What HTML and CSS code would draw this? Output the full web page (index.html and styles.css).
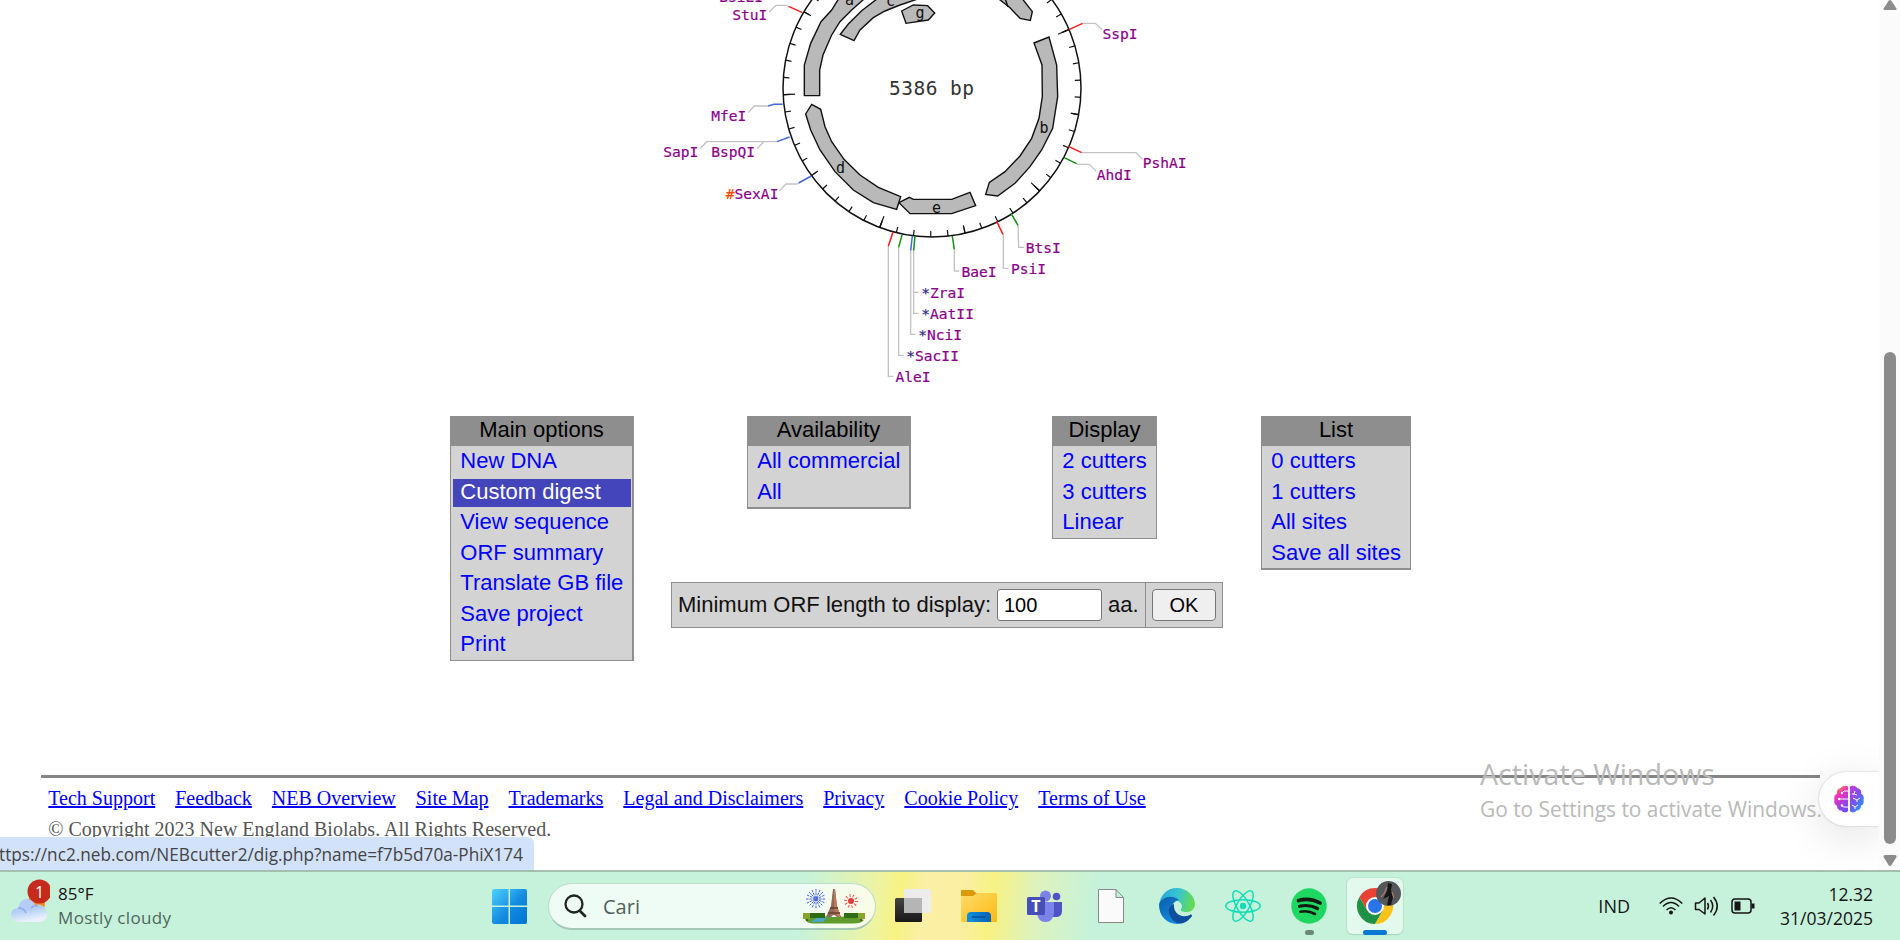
FILE: index.html
```html
<!DOCTYPE html>
<html lang="en">
<head>
<meta charset="utf-8">
<title>NEBcutter</title>
<link rel="stylesheet" href="styles.css">
</head>
<body>
<div class="browser">
  <main class="page">
    <svg class="map" width="600" height="400" viewBox="640 0 600 400">
      <g fill="none" stroke="#111">
        <circle cx="932" cy="88" r="149" stroke-width="1.500"/>
        <g transform="rotate(-90.200 932 88)">
          <circle cx="932" cy="88" r="146" stroke-width="6" pathLength="5386" stroke-dasharray="7 93"/>
          <circle cx="932" cy="88" r="145" stroke-width="8" pathLength="5386" stroke-dasharray="7 493"/>
          <circle cx="932" cy="88" r="143" stroke-width="12" pathLength="5386" stroke-dasharray="7 993"/>
        </g>
      </g>
      <g fill="#b9b9b9" stroke="#111" stroke-width="4.200" transform="translate(640 0) scale(.33333)">
        <path d="M493 287V195L512 130L543 65L575 30L600-10H680L635 30L600 65L575 105L549 165L539 210V287Z"/>
        <path d="M601 103L642 122L660 90L700 53L735 33L780 15L830-2L720-10L665 32L625 72Z"/>
        <path d="M785 33L798 70L865 60L884 39L863 17L820 15Z"/>
        <path d="M1065-12L1110 23L1140 55L1171 61L1177 35L1142-10Z"/>
        <path d="M1182 129L1227 111L1250 195L1253 290L1238 385L1205 450L1170 500L1125 550L1073 588L1037 583L1048 547L1095 515L1140 468L1175 415L1197 355L1207 290L1206 195Z"/>
        <path d="M777 608L808 592L820 598H935L990 577L1007 617L935 641H810Z"/>
        <path d="M515 313L542 328L555 380L575 425L612 478L660 525L715 562L782 590L770 628L700 608L640 570L585 515L540 450L512 390L497 342Z"/>
        <path fill="none" d="M1096-2L1104 20"/>
      </g>
      <g fill="none" stroke="#c2c2c2" stroke-width="4" transform="translate(640 0) scale(.33333)">
        <path d="M446 19L438 16H408L388 36M384 318H343L325 338M411 425H200L180 446M370 427L352 446M476 549L470 552H438L418 572"/>
        <path d="M1328 70H1366L1387 90M1325 458H1488L1507 477M1310 493H1348L1368 513"/>
        <path d="M1134 676L1136 742H1152M1090 703V805H1106M943 748V813H958M821 752V940H836M821 877H836M812 752V1003H827M776 742V1066H791M745 739V1129H760"/>
      </g>
      <g fill="none" stroke-width="4.500" transform="translate(640 0) scale(.33333)">
        <path stroke="#ff1a1a" d="M487 38L446 19M1287 89L1328 70M1285 439L1325 458M1070 664L1089 703M759 696L745 739"/>
        <path stroke="#4169e1" d="M428 313H402L384 318M449 411L411 425M514 528L476 549M817 708L812 752"/>
        <path stroke="#129012" d="M1271 472L1310 491M1113 640L1134 676M937 708L943 748M825 708L821 752M786 705L776 742"/>
      </g>
      <g class="gene">
        <text x="845" y="5">a</text><text x="886" y="6">c</text><text x="915.500" y="17.500">g</text>
        <text x="1039.500" y="133">b</text><text x="932" y="212.500">e</text><text x="836" y="172.500">d</text>
      </g>
      <text class="size" x="889" y="94.500" textLength="85">5386 bp</text>
      <g class="site" transform="translate(.2 -.4)">
        <text x="710.200" y="2.400"><tspan class="star">*</tspan>BsiEI</text>
        <text x="732" y="20.700">StuI</text>
        <text x="711" y="121.400">MfeI</text>
        <text x="663" y="157.400">SapI</text>
        <text x="711" y="157.400">BspQI</text>
        <text x="725.500" y="199.300"><tspan class="hash">#</tspan>SexAI</text>
        <text x="1102.300" y="39.300">SspI</text>
        <text x="1142.500" y="168">PshAI</text>
        <text x="1096.500" y="180">AhdI</text>
        <text x="1025.500" y="253.400">BtsI</text>
        <text x="1010.800" y="274.400">PsiI</text>
        <text x="961.200" y="277.400">BaeI</text>
        <text x="921" y="298.400"><tspan class="star">*</tspan>ZraI</text>
        <text x="921" y="319.400"><tspan class="star">*</tspan>AatII</text>
        <text x="918" y="340.400"><tspan class="star">*</tspan>NciI</text>
        <text x="906" y="361.400"><tspan class="star">*</tspan>SacII</text>
        <text x="895.200" y="382.400">AleI</text>
      </g>
    </svg>

    <section class="options">
      <div class="menu main">
        <h2>Main options</h2>
        <a>New DNA</a><a class="active">Custom digest</a><a>View sequence</a><a>ORF summary</a><a>Translate GB file</a><a>Save project</a><a>Print</a>
      </div>
      <div class="side">
        <div class="menus">
          <div class="menu avail"><h2>Availability</h2><a>All commercial</a><a>All</a></div>
          <div class="menu display"><h2>Display</h2><a>2 cutters</a><a>3 cutters</a><a>Linear</a></div>
          <div class="menu list"><h2>List</h2><a>0 cutters</a><a>1 cutters</a><a>All sites</a><a>Save all sites</a></div>
        </div>
        <form class="orf">
          <label class="orf-label">Minimum ORF length to display: <input class="orf-input" value="100"> aa.</label>
          <div class="orf-submit"><button class="orf-button" type="button">OK</button></div>
        </form>
      </div>
    </section>

    <footer class="footer">
      <nav class="links"><a>Tech Support</a><a>Feedback</a><a>NEB Overview</a><a>Site Map</a><a>Trademarks</a><a>Legal and Disclaimers</a><a>Privacy</a><a>Cookie Policy</a><a>Terms of Use</a></nav>
      <p class="copy">© Copyright 2023 New England Biolabs. All Rights Reserved.</p>
    </footer>
    <div class="status"><svg width="530" height="33"><text x="-1" y="24" textLength="524" lengthAdjust="spacingAndGlyphs">ttps://nc2.neb.com/NEBcutter2/dig.php?name=f7b5d70a-PhiX174</text></svg></div>
    <div class="assistant">
      <svg width="30" height="28" viewBox="0 0 30 28">
        <defs>
          <linearGradient id="bl" x1="0.200" y1="0" x2="0.600" y2="1"><stop offset="0" stop-color="#ff9a1f"/><stop offset=".35" stop-color="#f02fc0"/><stop offset="1" stop-color="#6a4cf5"/></linearGradient>
          <linearGradient id="br" x1="0" y1="0" x2="0.800" y2="1"><stop offset="0" stop-color="#d236dc"/><stop offset=".5" stop-color="#7a50f0"/><stop offset="1" stop-color="#16a4ff"/></linearGradient>
        </defs>
        <path fill="url(#bl)" d="M14 1.500C12 0 8 .5 7 3C4 3.500 2 6 3 8.500C0 10 0 13 .5 15C-.2 18 1 20 3 20.500C3 24 5 25.500 7.500 25.500C9 28 13 28 14 26Z"/>
        <path fill="url(#br)" d="M16 1.500C18 0 22 .5 23 3C26 3.500 28 6 27 8.500C30 10 30 13 29.500 15C30.200 18 29 20 27 20.500C27 24 25 25.500 22.500 25.500C21 28 17 28 16 26Z"/>
        <g fill="none" stroke="#fff" stroke-width="1"><path d="M14 6H10L8 8M4 14H14M7 20Q9 23 14 22M18 9H20L21 6M20 9L23 10M19 13L23 15L26 13M23 15V17M18 20L21 22L24 20M21 22V24"/></g>
        <g fill="#fff"><circle cx="8" cy="8" r="1.200"/><circle cx="5" cy="14" r="1.200"/><circle cx="8" cy="20.500" r="1.200"/></g>
      </svg>
    </div>
    <div class="watermark">
      <svg width="350" height="72"><text class="wm-title" x="0" y="30" textLength="235" lengthAdjust="spacingAndGlyphs">Activate Windows</text><text class="wm-sub" x="0" y="62" textLength="342" lengthAdjust="spacingAndGlyphs">Go to Settings to activate Windows.</text></svg>
    </div>
  </main>
  <div class="scrollbar">
    <svg width="21" height="870" fill="#8b8b8b"><path d="M9.500 1L4.500 8.500Q4 10 6 10H16Q18 10 17.500 8.500L12.500 1Q11-1 9.500 1Z"/><rect x="5" y="352" width="12" height="492" rx="6"/><path d="M9.500 865L4.500 857Q4 855 6 855H16Q18 855 17.500 857L12.500 865Q11 867 9.500 865Z"/></svg>
  </div>
</div>

<div class="taskbar">
  <div class="weather">
    <svg width="50" height="62" viewBox="0 872 50 62">
      <defs><linearGradient id="cloud" x1="0" y1="0" x2="0.300" y2="1"><stop offset="0" stop-color="#b7ccf6"/><stop offset=".55" stop-color="#b4cdf7"/><stop offset="1" stop-color="#e9f0fb"/></linearGradient></defs>
      <circle cx="36" cy="904" r="9" fill="#f5891c"/>
      <path fill="url(#cloud)" d="M18 922Q11 921 11 914Q12 908 18 908Q20 899 27 899Q33 899 35 905Q41 903 45 908Q47 911 47 915Q46 921 40 922Z"/>
      <path fill="none" stroke="#8fadeb" stroke-width="1.500" d="M18 908Q24 908 26 913M31 908Q34 905 38 906"/>
      <circle cx="39.500" cy="891.500" r="12" fill="#c42b1c"/>
      <text class="badge" x="35" y="897.500">1</text>
    </svg>
    <div class="weather-text"><span>85°F</span><span class="muted">Mostly cloudy</span></div>
  </div>
  <svg class="start" width="35" height="35" viewBox="0 0 35 35">
    <defs><linearGradient id="win" gradientUnits="userSpaceOnUse" x1="0" y1="0" x2="35" y2="35"><stop offset="0" stop-color="#4fd2ff"/><stop offset=".55" stop-color="#128be0"/><stop offset="1" stop-color="#0073d2"/></linearGradient></defs>
    <path fill="url(#win)" d="M2 0H16.500V16.500H0V2Q0 0 2 0ZM18 0H33Q35 0 35 2V16.500H18ZM0 18H16.500V35H2Q0 35 0 33ZM18 18H35V33Q35 35 33 35H18Z"/>
  </svg>
  <div class="search">
    <svg width="24" height="24" viewBox="0 0 24 24" fill="none" stroke="#222" stroke-width="2.300"><circle cx="10" cy="10" r="8.500"/><path stroke-width="2.800" stroke-linecap="round" d="M16 17L21 22"/></svg>
    <span class="search-text">Cari</span>
    <svg width="62" height="36" viewBox="0 0 62 36">
      <path stroke="#4a62dc" stroke-width="1" stroke-dasharray="2.500 .8" d="M13 1V21M3 11H23M6 4L20 18M20 4L6 18M9 2L17 20M17 2L9 20M4 7L22 15M4 15L22 7"/>
      <circle cx="48" cy="13" r="3" fill="#e23a3a"/><circle cx="48" cy="13" r="5.500" fill="none" stroke="#e55" stroke-width="3" stroke-dasharray="1 2.400"/>
      <path fill="#5f9c2d" d="M2 31Q12 27 30 29Q50 27 61 32Q58 36 48 35.500H10Q3 35 2 31Z"/><path fill="#4aa6c9" d="M8 34Q12 29 24 29L20 34Z"/>
      <path fill="none" stroke="#4e4025" stroke-width="1.500" d="M4 29V33M58 29V33"/>
      <path fill="#2f6d15" d="M0 25H22V30H0ZM41 25H62V30H41Z"/><path fill="#87a52c" d="M0 25H7V31H0ZM55 25H62V31H55Z"/>
      <path fill="#8d6a5c" d="M30 1H32L34 18L38 29H34Q31 25 28 29H23L28 18Z"/><path fill="#c17a55" d="M31 1H32L34 18L38 29H35L31 21Z"/><path stroke="#6d3e2c" stroke-width="1.500" d="M27 20H35M25 25H37"/>
    </svg>
  </div>
  <div class="apps">
    <div class="app"><svg width="36" height="36" viewBox="0 0 36 36">
      <defs><linearGradient id="tv" x1="0" y1="0" x2="0" y2="1"><stop offset="0" stop-color="#444"/><stop offset="1" stop-color="#181818"/></linearGradient></defs>
      <rect y="10" width="27" height="24" rx="1.500" fill="url(#tv)"/><rect x="9" y="1" width="27" height="24" rx="1.500" fill="#ececec"/><path fill="#b5b5b5" d="M9 10H27V25H10.500Q9 25 9 23.500Z"/></svg></div>
    <div class="app"><svg width="36" height="36" viewBox="0 0 36 36">
      <defs><linearGradient id="fold" x1="0" y1="0" x2="1" y2="1"><stop offset="0" stop-color="#ffdc6b"/><stop offset="1" stop-color="#fcb912"/></linearGradient><linearGradient id="fb" x1="0" y1="0" x2="1" y2="0"><stop offset="0" stop-color="#1290df"/><stop offset="1" stop-color="#0b62b5"/></linearGradient></defs>
      <path fill="#dc9a08" d="M0 3Q0 2 1 2H12L15 5H35Q36 5 36 6V12H0Z"/><path fill="url(#fold)" d="M0 8H12L16 5H36V34H0Z"/><path fill="url(#fb)" d="M6 34V28Q6 24 10 24H26Q30 24 30 28V34Z"/><path stroke="#0a4a91" stroke-width="1.300" d="M11 29H25"/></svg></div>
    <div class="app"><svg width="36" height="36" viewBox="0 0 36 36">
      <circle cx="29.500" cy="8.500" r="3.800" fill="#4f54c4"/><path fill="#4f54c4" d="M24 14H35V23Q35 29 29 29H24Z"/><circle cx="18.500" cy="8" r="5.500" fill="#7b83eb"/><path fill="#7b83eb" d="M10 14H27V25Q26 34 18.500 34Q11 34 10 25Z"/><rect y="9" width="18" height="18" rx="1.500" fill="#464eb8"/><text class="teams" x="4.200" y="23.500">T</text></svg></div>
    <div class="app"><svg width="26" height="35" viewBox="0 0 26 35"><path fill="#fafafa" stroke="#888" d="M.5.500H18L25.500 8.500V33.500H.5ZM18 .5V8.500H25.500"/></svg></div>
    <div class="app"><svg width="36" height="36" viewBox="0 0 36 36">
      <defs><linearGradient id="e1" x1="0" y1="0.300" x2="1" y2="0.500"><stop offset="0" stop-color="#23a7dc"/><stop offset=".5" stop-color="#38c5d0"/><stop offset="1" stop-color="#66dd4a"/></linearGradient><linearGradient id="e2" x1="0" y1="0" x2="0.600" y2="1"><stop offset="0" stop-color="#0c5ca8"/><stop offset="1" stop-color="#118be0"/></linearGradient></defs>
      <path fill="url(#e1)" d="M0 18C1 7 8 0 18 0C28 0 36 8 36 16C36 21 32 24 28 24C23 24 21 23 22 21C24 19 23 14 18 13C10 10 3 11 0 18Z"/>
      <path fill="url(#e2)" d="M0 17C2 9 13 6 20 12C14 13 11 20 13 26C15 31 20 36 22 35.500C10 38 0 29 0 17Z"/>
      <path fill="#0d4f9c" d="M15 16C12 17 9 20 10 25C12 32 17 36 22 35.500C27 35 31 31 33 28C33 27 32 26 31 27C22 31 14 25 15 16Z"/></svg></div>
    <div class="app"><svg width="36" height="34" viewBox="-18 -17 36 34" fill="none" stroke="#12ddb6" stroke-width="1.500"><ellipse rx="17.200" ry="6.300"/><ellipse rx="17.200" ry="6.300" transform="rotate(60)"/><ellipse rx="17.200" ry="6.300" transform="rotate(120)"/><circle r="3.200" fill="#12ddb6" stroke="none"/></svg></div>
    <div class="app running"><svg width="36" height="36" viewBox="0 0 36 36"><circle cx="18" cy="18" r="17.700" fill="#1ed760"/><g fill="none" stroke="#101a12" stroke-linecap="round"><path stroke-width="3.700" d="M7.500 12.500Q19 9.500 29 15"/><path stroke-width="3.200" d="M8.500 18.300Q18 16 26.500 20.500"/><path stroke-width="2.600" d="M9.500 23.800Q17 22 24 26"/></g></svg></div>
    <div class="app current"><svg width="56" height="56" viewBox="0 0 56 56">
      <path fill="#ea4335" d="M12.400 19A18 18 0 0 1 43.600 19L28 19L20.200 32.500Z"/><path fill="#1f9246" d="M12.400 19A18 18 0 0 0 28 46L36 32.500L20.200 32.500Z"/><path fill="#fbc116" d="M43.600 19A18 18 0 0 1 28 46L36 32.500L28 19Z"/>
      <circle cx="28" cy="28" r="9" fill="#fff"/><circle cx="28" cy="28" r="7" fill="#2a74ea"/>
      <circle cx="41.500" cy="15.500" r="12.500" fill="#55585a"/><path fill="#171616" d="M41 5L45 6L44 12L46 19L44 27H40L42 18L36 21L40 13Z"/><path fill="none" stroke="#a87967" stroke-width="1.300" d="M40 9L37 16L34 19M45 14L47 20"/></svg></div>
  </div>
  <div class="tray">
    <span class="lang">IND</span>
    <svg width="96" height="24" viewBox="0 0 96 24" fill="none" stroke="#151515" stroke-width="1.500">
      <path d="M.7 9.500Q12 -1.500 23.300 9.500M4 12.500Q12 4.500 20 12.500M7.500 16Q12 11.500 16.500 16"/><circle cx="12" cy="18.500" r="2" fill="#151515" stroke="none"/>
      <path stroke-linejoin="round" d="M36.500 9H40L46 4V20L40 15.500H36.500ZM48.500 9Q50.500 12 48.500 15.500M51.500 6Q56 12 51.500 18.500M54.500 3Q62 12 54.500 21.500"/>
      <rect x="73" y="5" width="19" height="14" rx="3"/><rect x="75.500" y="7.500" width="6" height="9" fill="#151515" stroke="none"/><path stroke-width="3" d="M94 9.500V14.500"/>
    </svg>
    <div class="clock"><span>12.32</span><span>31/03/2025</span></div>
  </div>
</div>
</body>
</html>
```
FILE: styles.css
```css
* { box-sizing: border-box; }
body { margin: 0; width: 1900px; height: 940px; overflow: hidden; background: #fff; font-family: "Liberation Sans", Arial, sans-serif; }
svg { display: block; flex: none; }
.browser { display: flex; height: 870px; }
.page { position: relative; width: 1879px; height: 870px; overflow: hidden; }
.scrollbar { width: 21px; background: #fbfbfb; }
.map { margin-left: 640px; }
.site, .gene, .size { font-family: "DejaVu Sans Mono", monospace; }
.site { font-size: 14.6px; fill: #8b008b; stroke: #8b008b; stroke-width: .2px; }
.gene { font-size: 15px; fill: #111; }
.size { font-size: 19.5px; fill: #333; }
.star { fill: #2b2b85; stroke: #2b2b85; }
.hash { fill: #ff4500; stroke: #ff4500; }

.options { display: flex; gap: 37px; align-items: flex-start; margin: 16px 0 0 450px; height: 359px; }
.menu { display: flex; flex-direction: column; background: #d3d3d3; border: 1px solid #8e8e8e; border-right-width: 2px; font-size: 22px; white-space: nowrap; }
.menu h2 { flex: none; margin: 0 0 2px; height: 29px; background: #8e8e8e; color: #000; font-size: inherit; font-weight: 400; line-height: 25px; text-align: center; }
.menu a { flex: none; height: 28px; margin: 0 1px 2.5px 2px; padding-left: 7.3px; color: #00f; line-height: 26px; }
.menu a:last-child { margin-bottom: 0; }
.menu .active { background: #4444bb; color: #fff; }
.main { width: 184px; height: 245px; }
.avail { width: 164px; height: 93px; border-bottom-width: 2px; }
.display { width: 105px; height: 123px; border-right-width: 1px; }
.list { width: 150px; height: 154px; border-right-width: 1px; border-bottom-width: 2px; }
.menus { display: flex; align-items: flex-start; height: 166px; padding-left: 76px; }
.display { margin-left: 141px; }
.list { margin-left: 104px; }
.orf { display: flex; width: 552px; height: 46px; border: 1px solid #8e8e8e; background: #d3d3d3; color: #111; font-size: 22px; }
.orf-label { display: flex; align-items: center; gap: 6px; flex: 1; padding-left: 6px; white-space: nowrap; }
.orf-input { width: 105px; height: 32px; padding: 0 6px; border: 1px solid #767676; border-radius: 3px; font: 20px "Liberation Sans", Arial, sans-serif; }
.orf-submit { display: flex; align-items: center; justify-content: center; width: 77px; border-left: 1px solid #8e8e8e; }
.orf-button { width: 64px; height: 32px; padding: 0; border: 1px solid #767676; border-radius: 4px; background: #efefef; color: #000; font: 20px "Liberation Sans", Arial, sans-serif; }

.footer { width: 1779px; margin-left: 41px; padding: 8px 0 0 7.3px; border-top: 3px solid #858585; font: 20px/24px "Liberation Serif", "Times New Roman", serif; }
.links { display: flex; gap: 20px; color: #00f; }
.links a { text-decoration: underline; white-space: nowrap; }
.copy { margin: 7px 0 0; color: #555; }
.status { position: absolute; left: 0; top: 837px; width: 534px; height: 33px; border-radius: 0 6px 0 0; background: #d3e2fb; overflow: hidden; font: 18px "Open Sans", sans-serif; fill: #444; }
.assistant { position: absolute; right: 0; top: 772px; display: flex; align-items: center; width: 60px; height: 54px; padding-left: 15px; border-radius: 27px 0 0 27px; background: #fff; box-shadow: 0 0 2px rgba(0,0,0,.25), 0 10px 45px rgba(0,0,0,.12); }
.watermark { position: absolute; left: 1480px; top: 755px; font-family: "Open Sans", sans-serif; fill: #b9b9b9; }
.wm-title { font-size: 29px; }
.wm-sub { font-size: 22px; }

.taskbar { display: flex; height: 70px; border-top: 2px solid #a4bfb0; background: linear-gradient(97deg, transparent 800px, #eef4a0 875px, #f7f282 895px, #faefa4 920px, #faefa2 960px, #f7f282 988px, #dff2bc 1030px, transparent 1090px), #c6f2db; font-family: "Open Sans", sans-serif; font-size: 17px; color: #151515; }
.weather { display: flex; width: 492px; }
.weather-text { display: flex; flex-direction: column; padding-top: 10px; padding-left: 8px; line-height: 24px; font-size: 17px; }
.muted { color: #50665b; letter-spacing: .35px; }
.badge { font-size: 16px; fill: #fff; }
.start { margin-top: 17px; }
.search { display: flex; align-items: center; margin: 11px 0 0 21px; width: 328px; height: 47px; padding: 0 10px 0 15px; border: 1px solid #bcdccc; border-bottom: 2px solid #a5c8b6; border-radius: 24px; background: rgba(255,255,255,.72); }
.search-text { flex: 1; margin-left: 15px; color: #52605a; font-size: 20px; }
.apps { display: flex; margin-left: 4px; height: 68px; }
.app { position: relative; display: flex; align-items: center; justify-content: center; width: 66px; height: 68px; }
.running::after, .current::after { content: ""; position: absolute; bottom: 5px; width: 9px; height: 5px; border-radius: 3px; background: #6b8879; }
.current::after { width: 24px; background: #0078d4; }
.current svg { border-radius: 6px; background: rgba(255,255,255,.5); box-shadow: 0 0 0 1px rgba(130,180,155,.2), 0 1px 1px rgba(90,140,115,.2); }
.tray { display: flex; flex: 1; justify-content: flex-end; align-items: center; padding-right: 27px; }
.lang { margin-right: 29px; font-size: 18px; }
.clock { display: flex; flex-direction: column; align-items: flex-end; width: 118px; line-height: 24px; font-size: 17.5px; }
.teams { font-family: "Open Sans", sans-serif; font-size: 16px; font-weight: 700; fill: #fff; }
```
